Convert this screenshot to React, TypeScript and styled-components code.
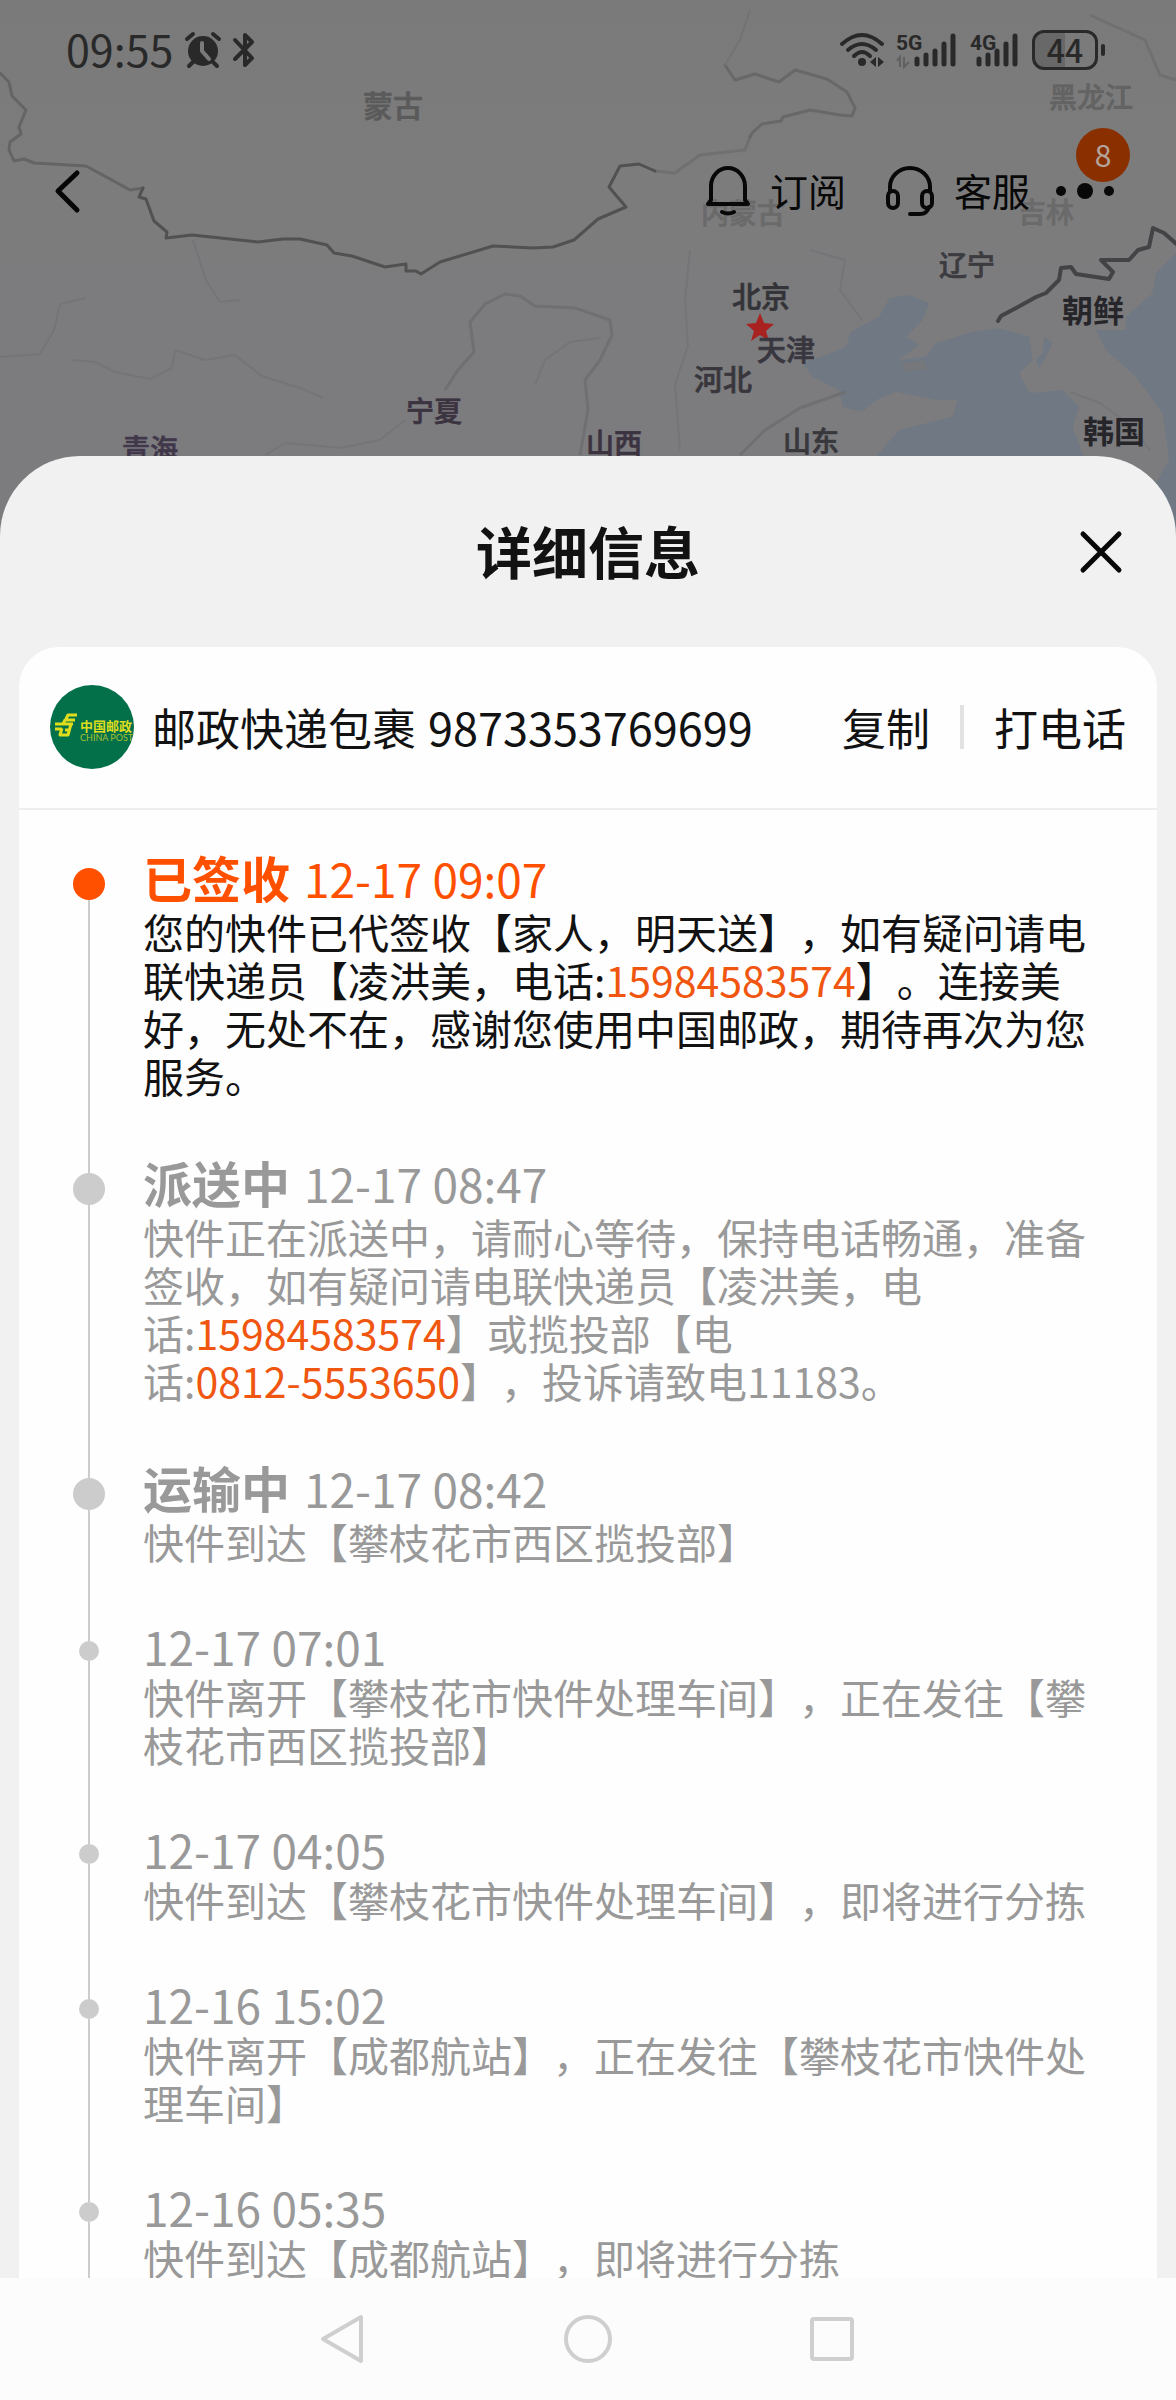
import React from "react";
import styled, { createGlobalStyle, css } from "styled-components";

const fontStack = `"Noto Sans CJK SC", "Noto Sans", sans-serif`;

const GlobalStyle = createGlobalStyle`
  *, *::before, *::after { box-sizing: border-box; }
  body {
    margin: 0;
    font-family: ${fontStack};
    color: #121212;
    background: #fcfcfc;
    text-spacing-trim: space-all;
  }
  button {
    border: 0;
    padding: 0;
    margin: 0;
    background: none;
    color: inherit;
    font: inherit;
    cursor: pointer;
  }
  h1, h2, p, ol { margin: 0; padding: 0; }
  svg { display: block; overflow: visible; }
`;

const Screen = styled.div`
  position: relative;
  display: flex;
  flex-direction: column;
  height: 100vh;
  overflow: hidden;
`;

const MapLayer = styled.div`
  position: absolute;
  inset: 0 0 auto;
  height: 560px;
  overflow: hidden;
  background: linear-gradient(#7a7a7a, #7c7c7d 30%, #7c7c7f);

  svg {
    width: 100%;
    height: 100%;
  }
`;

const MapArea = styled.header`
  position: relative;
  flex: 0 0 456px;
`;

const StatusBar = styled.div`
  display: flex;
  align-items: center;
  justify-content: space-between;
  height: 100px;
  padding: 0 71px 0 66px;
  color: #292929;
`;

const StatusGroup = styled.div`
  display: flex;
  align-items: center;
  gap: 12px;
`;

const Clock = styled.time`
  padding-bottom: 4px;
  font-size: 43px;
  line-height: 48px;
`;

const Battery = styled.div`
  display: flex;
  align-items: center;
  gap: 3px;

  &::after {
    content: "";
    width: 4px;
    height: 12px;
    border-radius: 2px;
    background: #292929;
  }
`;

const BatteryBody = styled.span`
  display: flex;
  align-items: center;
  justify-content: center;
  width: 66px;
  height: 40px;
  padding-bottom: 2px;
  border: 3px solid #292929;
  border-radius: 12px;
  background: linear-gradient(90deg, #686868 50%, transparent 50%);
  font-size: 32px;
  font-weight: 500;
  line-height: 32px;
`;

const Toolbar = styled.nav`
  display: flex;
  align-items: center;
  height: 182px;
  padding: 0 60px 0 54px;
  color: #080808;
`;

const ToolbarActions = styled.div`
  display: flex;
  align-items: center;
  gap: 40px;
  margin-left: auto;
`;

const ToolbarButton = styled.button`
  display: flex;
  align-items: center;
  gap: 20px;
  font-size: 38px;
  line-height: 48px;
`;

const ToolbarLabel = styled.span`
  padding-bottom: 2px;
`;

const MoreButton = styled.button`
  position: relative;
  margin-left: -16px;
`;

const Badge = styled.span`
  position: absolute;
  right: -14px;
  bottom: 19px;
  width: 54px;
  height: 54px;
  border-radius: 50%;
  background: #8a3000;
  color: #b5a49c;
  font-size: 30px;
  line-height: 52px;
  text-align: center;
`;

const Sheet = styled.main`
  position: relative;
  display: flex;
  flex: 1;
  flex-direction: column;
  min-height: 0;
  overflow: hidden;
  padding: 0 19px;
  border-radius: 80px 80px 0 0;
  background: #f1f1f2;
`;

const SheetHeader = styled.div`
  display: grid;
  grid-template-columns: 1fr auto 1fr;
  flex: 0 0 191px;
  align-items: center;
  padding: 0 34px;
`;

const SheetTitle = styled.h1`
  grid-column: 2;
  padding-bottom: 4px;
  font-size: 56px;
  font-weight: 700;
  line-height: 64px;
`;

const CloseButton = styled.button`
  justify-self: end;
`;

const Card = styled.section`
  flex: 1;
  min-height: 0;
  overflow: hidden;
  border-radius: 40px 40px 0 0;
  background: #fefefe;
`;

const ParcelRow = styled.div`
  display: flex;
  align-items: center;
  height: 163px;
  padding: 0 31px;
  border-bottom: 2px solid #eeeeee;
  font-size: 44px;
  line-height: 52px;
`;

const ParcelName = styled.h2`
  display: flex;
  gap: 12px;
  margin-left: 17px;
  padding-bottom: 2px;
  font-size: 44px;
  font-weight: 400;
`;

const ParcelNumber = styled.span`
  font-size: 45px;
`;

const ParcelActions = styled.div`
  display: flex;
  align-items: center;
  gap: 30px;
  margin-left: auto;
  padding-bottom: 2px;
`;

const Separator = styled.span`
  width: 4px;
  height: 44px;
  background: #e2e2e2;
`;

const Timeline = styled.ol`
  padding: 40px 64px 0 54px;
  list-style: none;
`;

type Tone = "active" | "past";

const Item = styled.li<{ $tone: Tone }>`
  display: grid;
  grid-template-columns: 32px 1fr;
  gap: 38px;
  color: ${(p) => (p.$tone === "active" ? "#121212" : "#999999")};
`;

const Rail = styled.div<{ $first: boolean; $major: boolean }>`
  display: flex;
  flex-direction: column;
  align-items: center;

  &::before,
  &::after {
    content: "";
    width: 2px;
    background: #cccccc;
  }
  &::before {
    height: ${(p) => (p.$major ? 18 : 20)}px;
    ${(p) =>
      p.$first &&
      css`
        background: transparent;
      `}
  }
  &::after {
    flex: 1;
  }
`;

const Dot = styled.span<{ $tone: Tone; $major: boolean }>`
  width: ${(p) => (p.$major ? 32 : 20)}px;
  height: ${(p) => (p.$major ? 32 : 20)}px;
  border-radius: 50%;
  background: ${(p) => (p.$tone === "active" ? "#ff5000" : "#cccccc")};
`;

const ItemBody = styled.div`
  padding-bottom: 56px;
`;

const ItemHead = styled.div<{ $tone: Tone; $major: boolean }>`
  display: flex;
  align-items: baseline;
  gap: 14px;
  height: ${(p) => (p.$major ? 57 : 51)}px;
  line-height: ${(p) => (p.$major ? 53 : 50)}px;
  color: ${(p) => (p.$tone === "active" ? "#ff5000" : "#999999")};
`;

const Status = styled.strong`
  font-size: 49px;
  font-weight: 700;
`;

const Stamp = styled.time`
  font-size: 46px;
`;

const Detail = styled.p`
  font-size: 41px;
  line-height: 48px;
`;

const PhoneLink = styled.a`
  color: #f0560f;
  text-decoration: none;
  white-space: nowrap;
`;

const NavBar = styled.nav`
  position: relative;
  display: flex;
  flex: 0 0 122px;
  align-items: center;
  justify-content: center;
  gap: 196px;
  background: #fcfcfc;
`;

const Phone = ({ n }: { n: string }) => <PhoneLink href={`tel:${n}`}>{n}</PhoneLink>;

interface Step {
  status?: string;
  time: string;
  detail: React.ReactNode;
}

const steps: Step[] = [
  {
    status: "已签收",
    time: "12-17 09:07",
    detail: (
      <>
        您的快件已代签收【家人，明天送】，如有疑问请电联快递员【凌洪美，电话:
        <Phone n="15984583574" />
        】。连接美好，无处不在，感谢您使用中国邮政，期待再次为您服务。
      </>
    ),
  },
  {
    status: "派送中",
    time: "12-17 08:47",
    detail: (
      <>
        快件正在派送中，请耐心等待，保持电话畅通，准备签收，如有疑问请电联快递员【凌洪美，电话:
        <Phone n="15984583574" />
        】或揽投部【电话:
        <Phone n="0812-5553650" />
        】，投诉请致电11183。
      </>
    ),
  },
  { status: "运输中", time: "12-17 08:42", detail: "快件到达【攀枝花市西区揽投部】" },
  { time: "12-17 07:01", detail: "快件离开【攀枝花市快件处理车间】，正在发往【攀枝花市西区揽投部】" },
  { time: "12-17 04:05", detail: "快件到达【攀枝花市快件处理车间】，即将进行分拣" },
  { time: "12-16 15:02", detail: "快件离开【成都航站】，正在发往【攀枝花市快件处理车间】" },
  { time: "12-16 05:35", detail: "快件到达【成都航站】，即将进行分拣" },
];

const places = [
  { name: "蒙古", x: 363, y: 117, size: 30, fill: "#5a5a5a" },
  { name: "黑龙江", x: 1049, y: 108, size: 28, fill: "#636363" },
  { name: "内蒙古", x: 701, y: 224, size: 28, fill: "#6a6a6a" },
  { name: "吉林", x: 1018, y: 223, size: 28, fill: "#6a6a6a" },
  { name: "辽宁", x: 939, y: 276, size: 28, fill: "#3c3c40" },
  { name: "北京", x: 732, y: 308, size: 29, fill: "#333338" },
  { name: "天津", x: 757, y: 361, size: 29, fill: "#38363f" },
  { name: "河北", x: 694, y: 391, size: 29, fill: "#38363c" },
  { name: "宁夏", x: 406, y: 422, size: 28, fill: "#3b3340" },
  { name: "青海", x: 122, y: 460, size: 28, fill: "#41374a" },
  { name: "山西", x: 586, y: 454, size: 28, fill: "#3b3340" },
  { name: "山东", x: 783, y: 452, size: 28, fill: "#38383c" },
  { name: "朝鲜", x: 1062, y: 322, size: 31, fill: "#26262a", bold: true },
  { name: "韩国", x: 1083, y: 443, size: 31, fill: "#26262a", bold: true },
];

const MapDrawing = () => (
  <svg viewBox="0 0 1176 560" preserveAspectRatio="xMidYMin slice" role="img" aria-label="物流地图">
    <g transform="translate(776 200) scale(0.3333)" fill="#6f7883">
      <path d="M80 490L150 465 210 440 225 395 310 350 340 295 400 285 460 310 440 360 390 410 430 435 365 480 450 470 480 430 590 395 670 385 760 410 770 480 730 520 760 580 860 570 910 620 890 680 930 790 300 770 370 690 530 650 545 600 480 600 360 575 300 600 260 635 200 620 190 570 110 530Z" />
      <path d="M1200 160L1140 220 1130 280 1050 350 1050 390 960 390 990 450 1080 530 1160 640 1180 780 1140 850 1100 1000 1200 1000Z" />
      <path d="M805 410L830 430 810 470 790 505 780 480 800 460Z" />
      <path d="M375 490L445 482 450 508 390 515Z" fill="#76787c" />
    </g>
    <g fill="none" stroke="#757577" strokeWidth="2" strokeLinejoin="round">
      <path d="M0 357L40 354 54 330 60 304 86 298" />
      <path d="M193 240L206 280 220 302 240 300" />
      <path d="M72 360L95 362 115 372 150 379 172 368 175 350 205 360 235 355 262 376 300 388 323 398" />
      <path d="M265 455L285 443 310 445 340 448 380 440 405 420" />
      <path d="M535 385L545 360 570 342 600 338" />
      <path d="M690 250L685 300 688 345 675 385 680 450" />
      <path d="M810 250L845 260 840 290 862 320" />
      <path d="M1070 392L1100 403 1130 425 1150 450" />
    </g>
    <g fill="none" stroke="#707072" strokeWidth="3" strokeLinejoin="round">
      <path d="M445 390L458 370 474 352 470 322 485 304 505 294 520 296 535 306 575 308 610 320 612 335 600 360 585 380 588 410 580 455" />
      <path d="M740 455L765 430 800 408 845 392" />
      <path d="M1090 15L1145 40 1160 75 1176 80" />
      <path d="M655 171L675 173 700 155 745 150 750 137" />
    </g>
    <g fill="none" strokeLinejoin="round" strokeLinecap="round">
      <path
        stroke="#646464"
        strokeWidth="3"
        d="M0 73L9 82 12 96 26 110 19 127 21 134 10 142 9 150 14 161 24 159 34 163 86 166 110 179 130 190 143 188"
      />
      <path
        stroke="#515152"
        strokeWidth="3"
        d="M143 188L139 197 146 199 154 221 167 232 166 238 192 235 258 242 283 239 300 239 327 245 334 253 352 256 385 267 406 264 406 271 416 271 421 274 440 262 493 246 533 248 553 247 574 240 598 219 626 207 609 187 620 166 639 164 655 171"
      />
      <path
        stroke="#686869"
        strokeWidth="3"
        d="M750 137L752 133 762 124 781 121 783 117 810 110 840 115 852 116 855 108 847 92 827 79 795 70 779 82 755 74 735 80 725 65"
      />
      <path stroke="#737373" strokeWidth="2" d="M725 65L740 40 750 10" />
      <path
        stroke="#434345"
        strokeWidth="4"
        d="M998 321L1001 316 1018 307 1036 297 1046 293 1059 280 1061 268 1071 267 1076 274 1109 279 1113 272 1101 260 1129 260 1138 250 1149 247 1153 228 1164 233 1180 247"
      />
    </g>
    <path fill="#a82222" d="M760 313L764 323 774 324 766 331 769 341 760 335 751 341 754 331 746 324 756 323Z" />
    {places.map((p) => (
      <text
        key={p.name}
        x={p.x}
        y={p.y}
        fontSize={p.size}
        fontWeight={p.bold ? 700 : 500}
        fill={p.fill}
        stroke={p.bold ? "none" : p.fill}
        strokeWidth="0.7"
      >
        {p.name}
      </text>
    ))}
  </svg>
);

const AlarmIcon = () => (
  <svg width="36" height="36" viewBox="0 0 36 36">
    <circle cx="18" cy="19" r="15" fill="#292929" />
    <path d="M2 7L8 2M28 2L34 7M8 30L4 34M28 30L32 34" stroke="#292929" strokeWidth="4" strokeLinecap="round" />
    <path d="M17 11V19L24 27" fill="none" stroke="#7a7a7a" strokeWidth="4" strokeLinecap="round" />
  </svg>
);

const BluetoothIcon = () => (
  <svg width="22" height="36" viewBox="0 0 22 36">
    <path
      d="M2 8L19 26 12 33V3L19 10 2 27"
      fill="none"
      stroke="#292929"
      strokeWidth="4"
      strokeLinecap="round"
      strokeLinejoin="round"
    />
  </svg>
);

const WifiIcon = () => (
  <svg width="44" height="36" viewBox="0 0 44 36">
    <g fill="none" stroke="#292929" strokeWidth="4" strokeLinecap="round">
      <path d="M2 12Q22 -6 42 12" />
      <path d="M8 18Q22 6 36 18" />
      <path d="M14 24Q22 16 30 24" />
    </g>
    <circle cx="22" cy="30" r="4" fill="#292929" />
    <path d="M36 25V35L30 30ZM38 25V35L44 30Z" fill="#292929" />
  </svg>
);

const SignalIcon = ({ label, offset, arrows }: { label: string; offset: number; arrows?: boolean }) => (
  <svg width={offset + 44} height="36" viewBox={`0 0 ${offset + 44} 36`}>
    <text x="0" y="18" fontSize="21" fontWeight="700" fontFamily="Roboto, sans-serif" fill="#292929">
      {label}
    </text>
    {arrows && (
      <path d="M1 29L4 25V35M8 25V35L13 30" fill="none" stroke="#606060" strokeWidth="2" />
    )}
    <g stroke="#292929" strokeWidth="5" strokeLinecap="round">
      {[27, 23, 19, 12, 4].map((top, i) => (
        <path key={top} d={`M${offset + 3 + i * 9} ${top}V32`} />
      ))}
    </g>
  </svg>
);

const BackIcon = () => (
  <svg width="26" height="44" viewBox="0 0 26 44">
    <path d="M23 4L4 22 23 41" fill="none" stroke="#050505" strokeWidth="5" strokeLinecap="round" strokeLinejoin="round" />
  </svg>
);

const BellIcon = () => (
  <svg width="44" height="50" viewBox="0 0 44 50">
    <g fill="none" stroke="currentColor" strokeWidth="4" strokeLinecap="round" strokeLinejoin="round">
      <path d="M5 34V20a17 18 0 0 1 34 0V34L42 38H2Z" />
      <path d="M16 46Q22 49 28 46" />
    </g>
  </svg>
);

const HeadsetIcon = () => (
  <svg width="48" height="50" viewBox="0 0 48 50">
    <g fill="none" stroke="currentColor" strokeWidth="4" strokeLinecap="round">
      <path d="M4 25V21a20 19 0 0 1 40 0V25" />
      <rect x="2" y="25" width="10" height="17" rx="5" />
      <rect x="36" y="25" width="10" height="17" rx="5" />
      <path d="M43 41Q41 48 34 48H24" />
    </g>
  </svg>
);

const DotsIcon = () => (
  <svg width="62" height="20" viewBox="0 0 62 20" fill="currentColor">
    <circle cx="7" cy="10" r="5" />
    <circle cx="31" cy="10" r="8" />
    <circle cx="55" cy="10" r="5" />
  </svg>
);

const CloseIcon = () => (
  <svg width="44" height="44" viewBox="0 0 44 44">
    <path d="M4 4L40 40M40 4L4 40" stroke="#080808" strokeWidth="5" strokeLinecap="round" />
  </svg>
);

const ChinaPostLogo = () => (
  <svg width="85" height="85" viewBox="0 0 85 85" role="img" aria-label="中国邮政">
    <circle cx="42" cy="42" r="42" fill="#04704a" />
    <g fill="none" stroke="#dede1c" strokeWidth="3" strokeLinejoin="round">
      <path d="M27 30H18L16 34M25 35H15L13 39M23 39H5M12 44H5M12 43L10 50H18L21 39M15 45H19" />
    </g>
    <text x="30" y="46" fontSize="13" fontWeight="700" fill="#dede1c">
      中国邮政
    </text>
    <text x="30" y="56" fontSize="9" fontFamily="Lato, sans-serif" fill="#a9c22e">
      CHINA POST
    </text>
  </svg>
);

export default function App() {
  return (
    <Screen lang="zh-CN">
      <GlobalStyle />
      <MapLayer>
        <MapDrawing />
      </MapLayer>
      <MapArea>
        <StatusBar>
          <StatusGroup>
            <Clock>09:55</Clock>
            <AlarmIcon />
            <BluetoothIcon />
          </StatusGroup>
          <StatusGroup>
            <WifiIcon />
            <SignalIcon label="5G" offset={18} arrows />
            <SignalIcon label="4G" offset={6} />
            <Battery>
              <BatteryBody>44</BatteryBody>
            </Battery>
          </StatusGroup>
        </StatusBar>
        <Toolbar>
          <button aria-label="返回">
            <BackIcon />
          </button>
          <ToolbarActions>
            <ToolbarButton>
              <BellIcon />
              <ToolbarLabel>订阅</ToolbarLabel>
            </ToolbarButton>
            <ToolbarButton>
              <HeadsetIcon />
              <ToolbarLabel>客服</ToolbarLabel>
            </ToolbarButton>
            <MoreButton aria-label="更多">
              <DotsIcon />
              <Badge>8</Badge>
            </MoreButton>
          </ToolbarActions>
        </Toolbar>
      </MapArea>
      <Sheet>
        <SheetHeader>
          <SheetTitle>详细信息</SheetTitle>
          <CloseButton aria-label="关闭">
            <CloseIcon />
          </CloseButton>
        </SheetHeader>
        <Card>
          <ParcelRow>
            <ChinaPostLogo />
            <ParcelName>
              邮政快递包裹
              <ParcelNumber>9873353769699</ParcelNumber>
            </ParcelName>
            <ParcelActions>
              <button>复制</button>
              <Separator />
              <button>打电话</button>
            </ParcelActions>
          </ParcelRow>
          <Timeline>
            {steps.map((step, i) => {
              const tone: Tone = i === 0 ? "active" : "past";
              const major = Boolean(step.status);
              return (
                <Item key={step.time} $tone={tone}>
                  <Rail $first={i === 0} $major={major}>
                    <Dot $tone={tone} $major={major} />
                  </Rail>
                  <ItemBody>
                    <ItemHead $tone={tone} $major={major}>
                      {step.status && <Status>{step.status}</Status>}
                      <Stamp>{step.time}</Stamp>
                    </ItemHead>
                    <Detail>{step.detail}</Detail>
                  </ItemBody>
                </Item>
              );
            })}
          </Timeline>
        </Card>
      </Sheet>
      <NavBar>
        <button aria-label="系统返回">
          <svg width="48" height="50" viewBox="0 0 48 50">
            <path d="M41 3V47L3 25Z" fill="none" stroke="#cfcfcf" strokeWidth="4" strokeLinejoin="round" />
          </svg>
        </button>
        <button aria-label="主页">
          <svg width="48" height="50" viewBox="0 0 48 50">
            <circle cx="24" cy="25" r="22" fill="none" stroke="#cfcfcf" strokeWidth="4" />
          </svg>
        </button>
        <button aria-label="最近任务">
          <svg width="48" height="50" viewBox="0 0 48 50">
            <rect x="4" y="5" width="40" height="40" rx="2" fill="none" stroke="#cfcfcf" strokeWidth="4" />
          </svg>
        </button>
      </NavBar>
    </Screen>
  );
}
